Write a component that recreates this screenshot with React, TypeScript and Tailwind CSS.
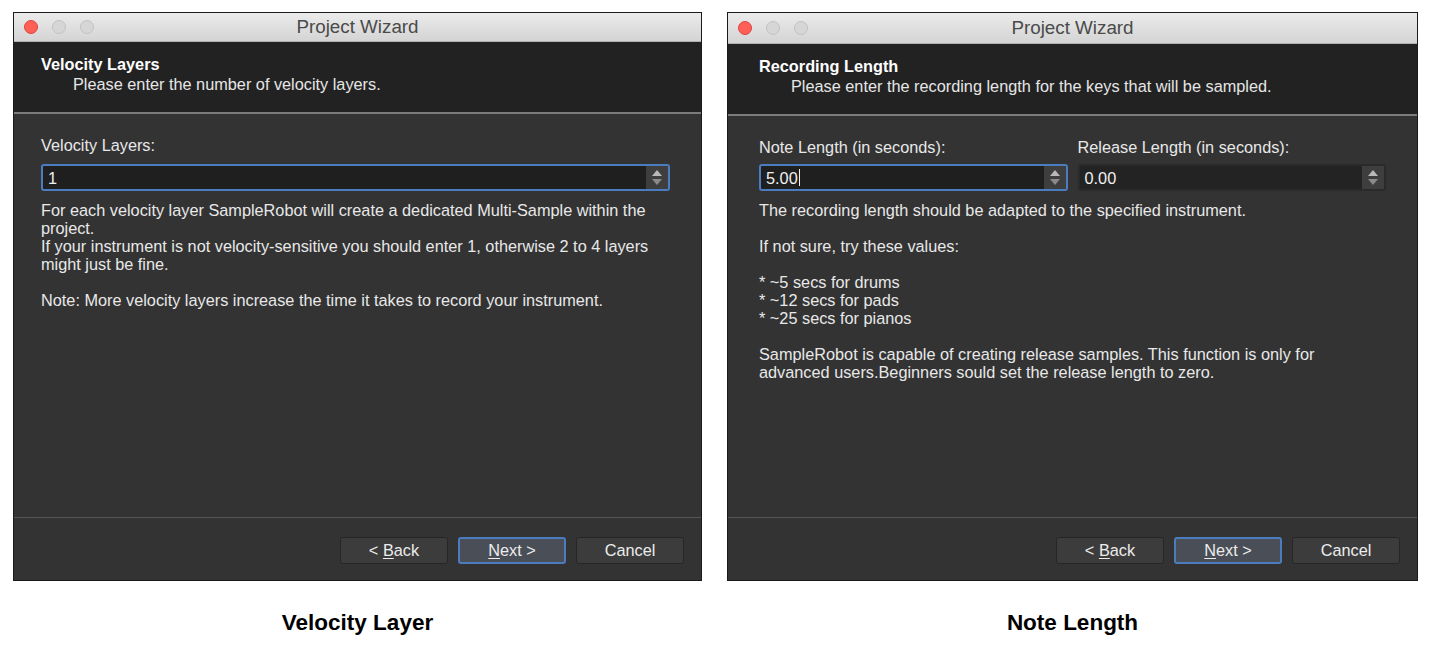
import React from 'react'

const ui = { fontFamily: '"Liberation Sans", Arial, sans-serif' }

function TrafficLights() {
  return (
    <div className="flex items-center gap-[14px] pl-[10px]">
      <span className="w-[14px] h-[14px] rounded-full bg-[#fe5f57] border border-[#e0443e]"></span>
      <span className="w-[14px] h-[14px] rounded-full bg-[#d6d6d6] border border-[#c2c2c2]"></span>
      <span className="w-[14px] h-[14px] rounded-full bg-[#d6d6d6] border border-[#c2c2c2]"></span>
    </div>
  )
}

function Spin({ value, focused, caret }: { value: string; focused?: boolean; caret?: boolean }) {
  return (
    <div
      className={
        'flex h-[27px] rounded-[3px] ' +
        (focused ? 'border-2 border-[#4b7cc0] bg-[#1f1f1f]' : 'border-2 border-[#2a2a2a] bg-[#232323]')
      }
    >
      <div className="flex-1 flex items-center pl-[5px] text-[16.3px] text-[#f0f0f0]">
        {value}
        {caret && <span className="inline-block w-px h-[17px] bg-[#f0f0f0] ml-px"></span>}
      </div>
      <div className="w-[22px] bg-[#3e3e3e] flex flex-col items-center justify-center gap-[3px]">
        <svg width="10" height="6" viewBox="0 0 10 6"><path d="M5 0 L10 6 L0 6 Z" fill="#b9b9b9" /></svg>
        <svg width="10" height="6" viewBox="0 0 10 6"><path d="M0 0 L10 0 L5 6 Z" fill="#8a8a8a" /></svg>
      </div>
    </div>
  )
}

function Btn({ children, primary }: { children: React.ReactNode; primary?: boolean }) {
  return (
    <div
      className={
        'w-[108px] h-[27px] rounded-[3px] flex items-center justify-center text-[16.3px] text-[#ececec] ' +
        (primary ? 'bg-[#4a4e56] border-2 border-[#4b7cc0]' : 'bg-[#3c3c3c] border border-[#262626]')
      }
    >
      <span className="whitespace-pre">{children}</span>
    </div>
  )
}

function Wizard({
  title,
  subtitle,
  bar,
  pad,
  children,
}: {
  title: string
  subtitle: string
  bar: string
  pad: string
  children: React.ReactNode
}) {
  return (
    <div className="flex flex-col h-[569px] border border-[#1a1a1a] bg-[#333333] overflow-hidden" style={ui}>
      <div
        className={
          bar +
          ' shrink-0 flex items-center relative bg-gradient-to-b from-[#ebebeb] to-[#d4d4d4] border-b border-[#b0b0b0]'
        }
      >
        <TrafficLights />
        <div className="absolute inset-0 flex items-center justify-center text-[18.8px] text-[#4a4a4a]">
          Project Wizard
        </div>
      </div>
      <div className={pad + ' h-[72px] shrink-0 bg-[#222222] pt-[13px] border-b-2 border-[#7c7c7c]'}>
        <div className="text-[16.3px] font-bold text-white leading-[19px]">{title}</div>
        <div className="text-[16.3px] text-[#e6e6e6] leading-[20px] pl-[32px]">{subtitle}</div>
      </div>
      <div className={pad + ' flex-1 pt-[22px] text-[16.3px] leading-[18px] text-[#e8e8e8]'}>{children}</div>
      <div className="h-[63px] shrink-0 border-t border-[#565656] flex items-center justify-end gap-[10px] pr-[17px] pt-[2px]">
        <Btn>
          {'< '}
          <span className="underline underline-offset-2">B</span>
          {'ack'}
        </Btn>
        <Btn primary>
          <span className="underline underline-offset-2">N</span>
          {'ext >'}
        </Btn>
        <Btn>Cancel</Btn>
      </div>
    </div>
  )
}

export default function App() {
  return (
    <div className="w-[1429px] h-[653px] bg-white pt-[12px] flex gap-[25px] pl-[13px]">
      <div className="w-[689px] flex flex-col">
        <Wizard
          title="Velocity Layers"
          subtitle="Please enter the number of velocity layers."
          bar="h-[29px]"
          pad="pl-[27px] pr-[31px]"
        >
          <div className="mb-[10px]">Velocity Layers:</div>
          <Spin value="1" focused />
          <div className="mt-[10px] whitespace-pre-line">
            {'For each velocity layer SampleRobot will create a dedicated Multi-Sample within the\nproject.\nIf your instrument is not velocity-sensitive you should enter 1, otherwise 2 to 4 layers\nmight just be fine.\n\nNote: More velocity layers increase the time it takes to record your instrument.'}
          </div>
        </Wizard>
        <div className="mt-[25px] text-center text-[22.5px] font-bold text-black" style={ui}>
          Velocity Layer
        </div>
      </div>
      <div className="w-[691px] flex flex-col">
        <Wizard
          title="Recording Length"
          subtitle="Please enter the recording length for the keys that will be sampled."
          bar="h-[31px]"
          pad="pl-[31px] pr-[31px]"
        >
          <div className="flex gap-[10px]">
            <div className="flex-1">
              <div className="mb-[8px]">Note Length (in seconds):</div>
              <Spin value="5.00" focused caret />
            </div>
            <div className="flex-1">
              <div className="mb-[8px]">Release Length (in seconds):</div>
              <Spin value="0.00" />
            </div>
          </div>
          <div className="mt-[10px] whitespace-pre-line">
            {'The recording length should be adapted to the specified instrument.\n\nIf not sure, try these values:\n\n* ~5 secs for drums\n* ~12 secs for pads\n* ~25 secs for pianos\n\nSampleRobot is capable of creating release samples. This function is only for\nadvanced users.Beginners sould set the release length to zero.'}
          </div>
        </Wizard>
        <div className="mt-[25px] text-center text-[22.5px] font-bold text-black" style={ui}>
          Note Length
        </div>
      </div>
    </div>
  )
}
